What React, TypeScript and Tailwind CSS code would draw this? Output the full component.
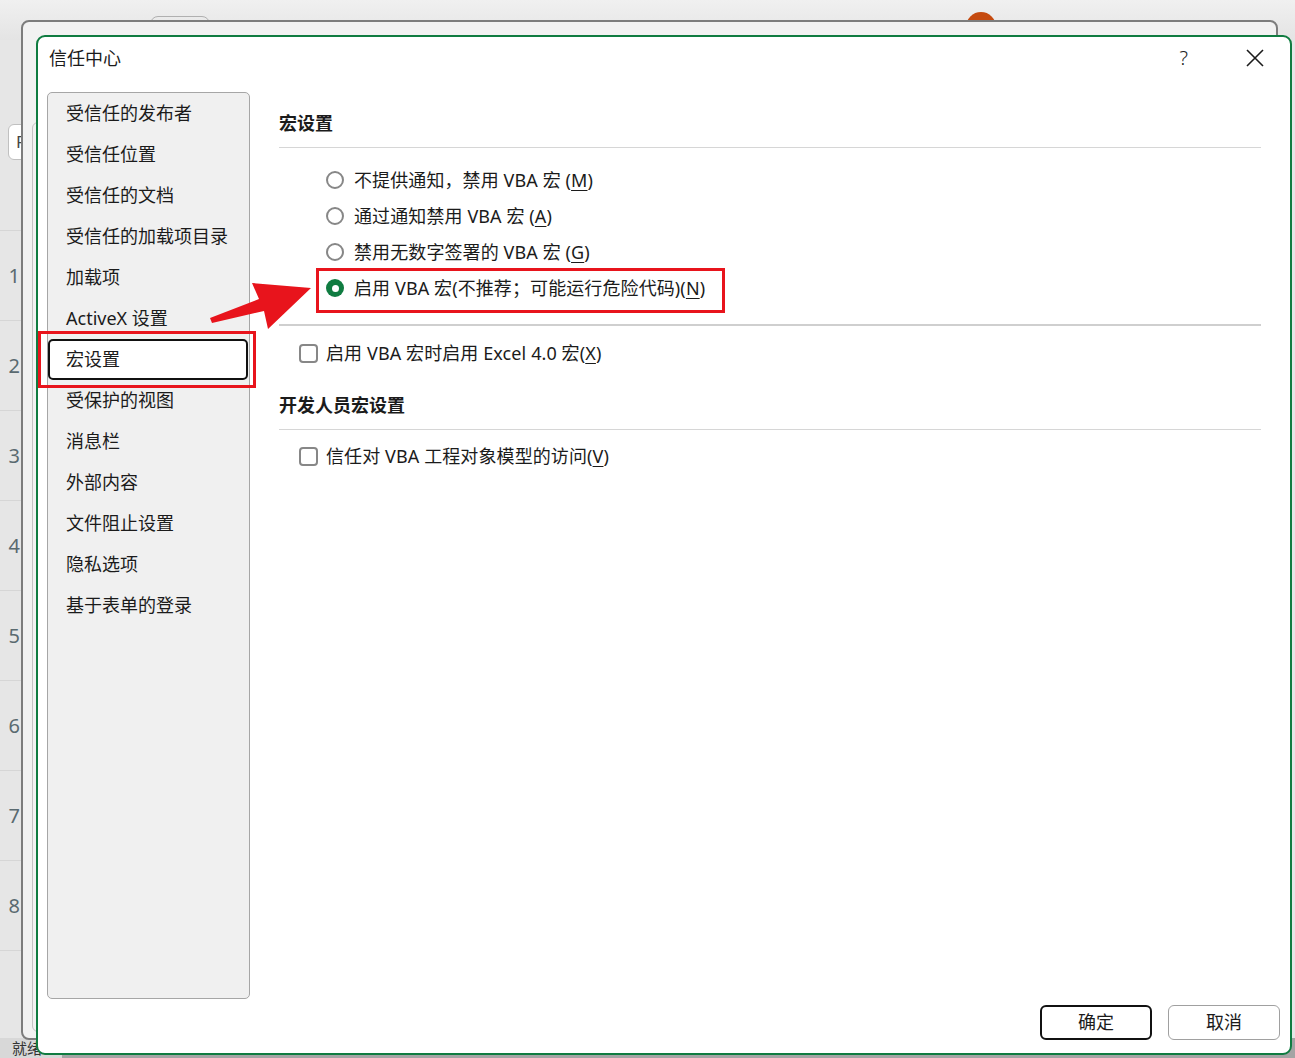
import React from 'react'

const navItems = [
  '受信任的发布者',
  '受信任位置',
  '受信任的文档',
  '受信任的加载项目录',
  '加载项',
  'ActiveX 设置',
  '宏设置',
  '受保护的视图',
  '消息栏',
  '外部内容',
  '文件阻止设置',
  '隐私选项',
  '基于表单的登录',
]

type Opt = { label: string; key: string; tail?: string; checked?: boolean }

const radios: Opt[] = [
  { label: '不提供通知，禁用 VBA 宏 (', key: 'M', tail: ')' },
  { label: '通过通知禁用 VBA 宏 (', key: 'A', tail: ')' },
  { label: '禁用无数字签署的 VBA 宏 (', key: 'G', tail: ')' },
  { label: '启用 VBA 宏(不推荐；可能运行危险代码)(', key: 'N', tail: ')', checked: true },
]

function Label({ o }: { o: Opt }) {
  return (
    <span className="tracking-[0.1px]">
      {o.label}
      <span className="underline underline-offset-[3px] decoration-1">{o.key}</span>
      {o.tail}
    </span>
  )
}

function Radio({ o }: { o: Opt }) {
  return (
    <div className="flex h-[36px] items-center pl-[47px]">
      {o.checked ? (
        <span className="flex h-[18px] w-[18px] items-center justify-center rounded-full bg-[#107c41]">
          <span className="h-[7px] w-[7px] rounded-full bg-white" />
        </span>
      ) : (
        <span className="h-[18px] w-[18px] rounded-full border-2 border-[#878787] bg-white" />
      )}
      <span className="ml-[10px]">
        <Label o={o} />
      </span>
    </div>
  )
}

function Check({ o }: { o: Opt }) {
  return (
    <div className="flex h-[36px] items-center pl-[20px]">
      <span className="h-[19px] w-[19px] rounded-[4px] border-2 border-[#878787] bg-white" />
      <span className="ml-[8px]">
        <Label o={o} />
      </span>
    </div>
  )
}

export default function App() {
  return (
    <div className="relative h-[1058px] w-[1295px] overflow-hidden bg-[#e6e6e6] font-['Noto_Sans','Noto_Sans_CJK_SC',sans-serif] text-[18px] text-[#1b1b1b]">
      {/* excel behind */}
      <div className="absolute left-0 top-0 h-[40px] w-full bg-gradient-to-b from-[#f0f0f0] to-[#e4e4e4]" />
      <div className="absolute left-[150px] top-[16px] h-[20px] w-[60px] rounded-[8px] border border-[#b0b0b0]" />
      <div className="absolute left-[966px] top-[12px] h-[30px] w-[30px] rounded-full bg-[#c54a0f]" />
      <div className="absolute left-[8px] top-[124px] h-[36px] w-[30px] rounded-[6px] border border-[#c0c0c0] bg-white pl-[7px] pt-[4px] text-[17px] text-[#444]">
        F
      </div>
      <div className="absolute left-0 top-[230px] flex w-[21px] flex-col border-t border-[#d6d6d6]">
        {['1', '2', '3', '4', '5', '6', '7', '8'].map((n) => (
          <div key={n} className="flex h-[90px] items-center justify-end border-b border-[#d6d6d6] pr-[1px] text-[20px] text-[#5a6a70]">
            {n}
          </div>
        ))}
      </div>
      <div className="absolute bottom-0 left-0 flex h-[20px] w-full items-center bg-[#a4a4a4] text-[15px] text-[#333]">
        <span className="flex h-full items-center bg-[#d8d8d8] pl-[12px] pr-[20px]">就绪</span>
      </div>

      {/* options dialog behind */}
      <div className="absolute left-[21px] top-[20px] h-[1020px] w-[1257px] rounded-[8px] border-2 border-[#7d7d7d] bg-[#f2f2f2]">
        <div className="ml-[9px] mt-[100px] h-[910px] w-[200px] rounded-[6px] border border-[#c4c4c4]" />
      </div>

      {/* trust center dialog */}
      <div className="absolute left-[36px] top-[35px] flex h-[1020px] w-[1256px] flex-col rounded-[9px] border-2 border-[#107c41] bg-white">
        <div className="flex h-[42px] shrink-0 items-center pl-[11px]">
          <span>信任中心</span>
          <span className="ml-auto mr-[57px] text-[20px] font-light text-[#222]">?</span>
          <svg width="20" height="20" viewBox="0 0 20 20" className="mr-[25px]">
            <path d="M2 2 L18 18 M18 2 L2 18" stroke="#1b1b1b" strokeWidth="1.6" />
          </svg>
        </div>
        <div className="mt-[13px] flex">
          <div className="ml-[9px] h-[907px] w-[203px] shrink-0 rounded-[5px] border border-[#a6a6a6] bg-[#f0f0f0]">
            {navItems.map((t) => (
              <div
                key={t}
                className={
                  t === '宏设置'
                    ? 'mr-[1px] flex h-[41px] items-center rounded-[5px] border-2 border-[#111] bg-white pl-[16px]'
                    : 'flex h-[41px] items-center pl-[18px]'
                }
              >
                {t}
              </div>
            ))}
          </div>
          <div className="ml-[29px] mr-[29px] flex-1">
            <div className="mt-[19px] h-[24px] font-bold leading-[24px]">宏设置</div>
            <div className="mt-[12px] h-px bg-[#d6d6d6]" />
            <div className="mt-[14px]">
              {radios.map((o) => (
                <Radio key={o.key} o={o} />
              ))}
            </div>
            <div className="mt-[18px] h-[2px] bg-[#cfcfcf]" />
            <div className="mt-[9px]">
              <Check o={{ label: '启用 VBA 宏时启用 Excel 4.0 宏(', key: 'X', tail: ')' }} />
            </div>
            <div className="mt-[22px] h-[24px] font-bold leading-[24px]">开发人员宏设置</div>
            <div className="mt-[12px] h-px bg-[#d6d6d6]" />
            <div className="mt-[8px]">
              <Check o={{ label: '信任对 VBA 工程对象模型的访问(', key: 'V', tail: ')' }} />
            </div>
          </div>
        </div>
        <div className="mt-[6px] flex justify-end gap-[16px] pr-[10px]">
          <button className="flex h-[35px] w-[112px] items-center justify-center rounded-[6px] border-2 border-[#111] bg-white">
            确定
          </button>
          <button className="flex h-[35px] w-[112px] items-center justify-center rounded-[6px] border border-[#a0a0a0] bg-white">
            取消
          </button>
        </div>
      </div>

      {/* annotation overlays */}
      <div className="absolute left-[38px] top-[331px] h-[57px] w-[218px] border-[3px] border-[#e8141c]" />
      <div className="absolute left-[316px] top-[268px] h-[45px] w-[409px] border-[3px] border-[#e8141c]" />
      <svg className="absolute left-0 top-0" width="1295" height="1058">
        <polygon points="210,318 259,299 252,283 311,288 268,329 264,311 212,323" fill="#e8141c" />
      </svg>
    </div>
  )
}
